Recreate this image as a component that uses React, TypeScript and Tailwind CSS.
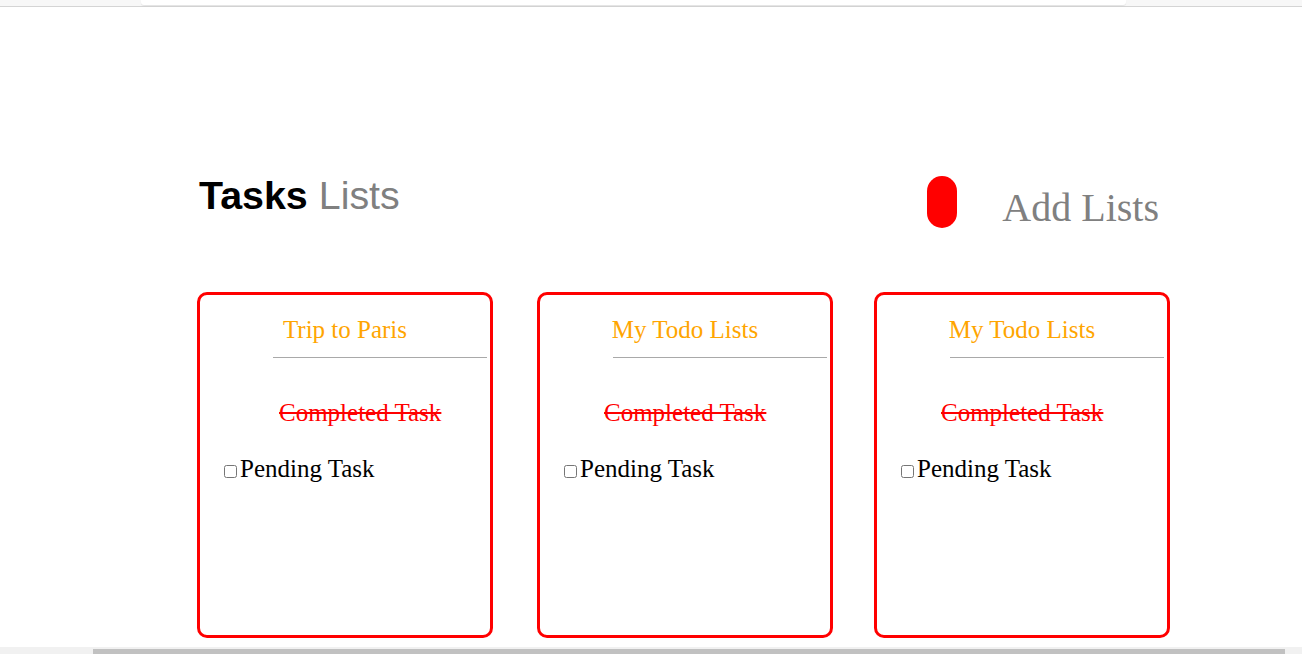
import React from "react";

type TaskList = {
  title: string;
  doneOffset: string;
};

const lists: TaskList[] = [
  { title: "Trip to Paris", doneOffset: "pl-[79px]" },
  { title: "My Todo Lists", doneOffset: "pl-[64px]" },
  { title: "My Todo Lists", doneOffset: "pl-[64px]" },
];

function ListCard({ list, className }: { list: TaskList; className?: string }) {
  return (
    <div className={`flex h-[346px] w-[296px] shrink-0 flex-col rounded-[10px] border-[3px] border-[#ff0000] ${className ?? ""}`}>
      <h2 className="pt-[22px] text-center text-[25px] leading-none text-[#ffa500]">{list.title}</h2>
      <div className="mt-[15px] ml-[73px] mr-[3px] h-px bg-[#a9a9a9]" />
      <p className={`mt-[42px] text-[25px] leading-none text-[#ff0000] line-through ${list.doneOffset}`}>Completed Task</p>
      <label className="mt-[31px] flex items-center pl-[24px] text-[25px] leading-none text-black">
        <input type="checkbox" className="mr-[3px] mt-[5px] h-[13px] w-[13px]" />
        Pending Task
      </label>
    </div>
  );
}

export default function App() {
  return (
    <div className="flex h-[654px] w-full flex-col overflow-hidden bg-white font-['Liberation_Serif',serif]">
      <div className="flex h-[7px] shrink-0 border-b border-[#d4d4d4] bg-[#f7f7f7] pl-[141px]">
        <div className="h-[5px] w-[985px] rounded-b-[3px] bg-white shadow-[0_1px_1px_rgba(0,0,0,0.08)]" />
      </div>

      <div className="flex-1 pl-[197px]">
        <div className="mt-[166px] flex w-[962px] items-start justify-between">
          <h1 className="mt-[3px] pl-[2px] font-['Liberation_Sans',Arial,sans-serif] text-[39.4px] leading-none">
            <span className="font-bold text-black">Tasks</span> <span className="text-[#808080]">Lists</span>
          </h1>
          <div className="mt-[3px] flex items-center">
            <button type="button" className="h-[52px] w-[30px] rounded-full bg-[#ff0000]" />
            <span className="ml-[45px] mt-[12px] text-[40px] leading-none text-[#808080]">Add Lists</span>
          </div>
        </div>

        <div className="mt-[64px] flex">
          <ListCard list={lists[0]} />
          <ListCard list={lists[1]} className="ml-[44px]" />
          <ListCard list={lists[2]} className="ml-[41px]" />
        </div>
      </div>

      <div className="relative flex h-[7px] shrink-0 items-end bg-[#f1f1f1] pl-[93px]">
        <div className="h-[5px] w-[1192px] bg-[#c1c1c1]" />
      </div>
    </div>
  );
}
